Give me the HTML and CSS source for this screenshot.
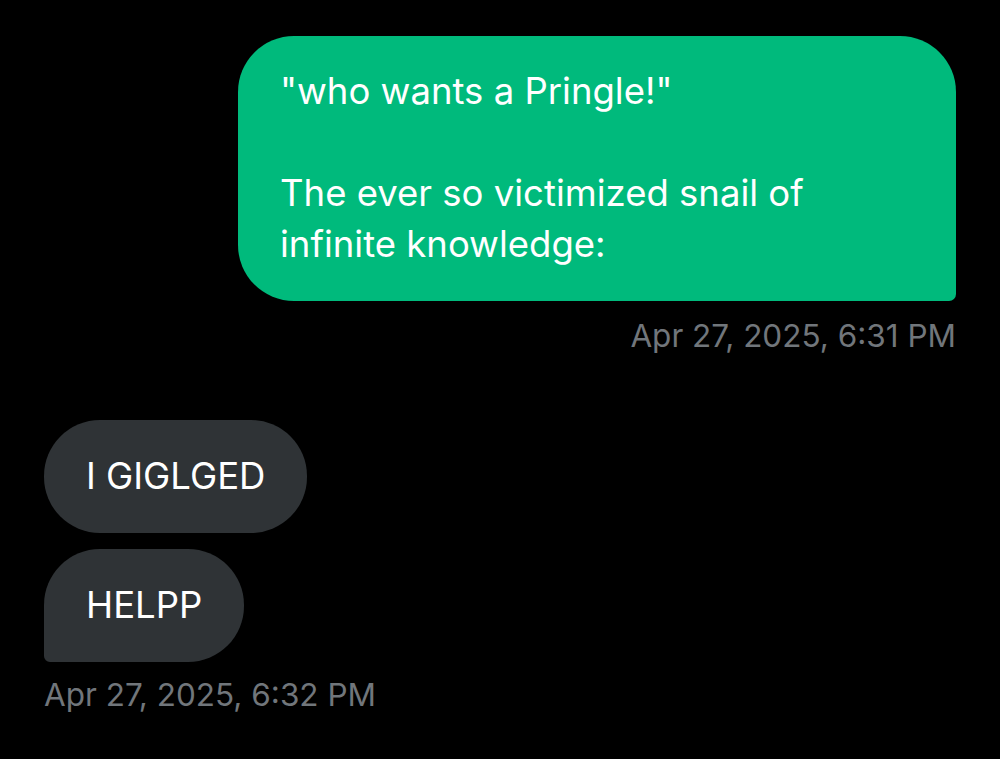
FILE: index.html
```html
<!DOCTYPE html>
<html lang="en">
<head>
    <meta charset="UTF-8">
    <meta name="viewport" content="width=device-width, initial-scale=1.0">
    <title>Messages</title>
    <link rel="stylesheet" href="styles.css">
</head>
<body>
    <div class="thread">
        <!-- Sent -->
        <div class="group group-out">
            <div class="bubble bubble-out">"who wants a Pringle!"<br><br>The ever so victimized snail of infinite knowledge:</div>
            <div class="stamp">Apr 27, 2025, 6:31 PM</div>
        </div>

        <!-- Received -->
        <div class="group group-in">
            <div class="bubble bubble-in">I GIGLGED</div>
            <div class="bubble bubble-in bubble-tail">HELPP</div>
            <div class="stamp">Apr 27, 2025, 6:32 PM</div>
        </div>
    </div>
</body>
</html>
```

FILE: styles.css
```css
body {
    margin: 0;
    background: #000;
    font-family: Inter, "Noto Sans", sans-serif;
    color: #fff;
    overflow: hidden;
}

.thread {
    padding: 36px 44px 0;
    display: flex;
    flex-direction: column;
    gap: 64px;
}

.group {
    display: flex;
    flex-direction: column;
    gap: 16px;
}

.group-out {
    align-items: flex-end;
    gap: 15px;
}

.group-in {
    align-items: flex-start;
}

.bubble {
    font-size: 36.5px;
    line-height: 51px;
    padding: 31px 42px 31px;
    border-radius: 56px;
}

.bubble-out {
    box-sizing: border-box;
    width: 718px;
    padding-top: 30px;
    background: #00ba7c;
    border-bottom-right-radius: 7px;
}

.bubble-in {
    background: #2f3336;
}

.bubble-tail {
    border-bottom-left-radius: 6px;
}

.stamp {
    font-size: 31.5px;
    line-height: 40px;
    color: #71767b;
}

.group-in .stamp {
    margin-top: -3px;
}
```
